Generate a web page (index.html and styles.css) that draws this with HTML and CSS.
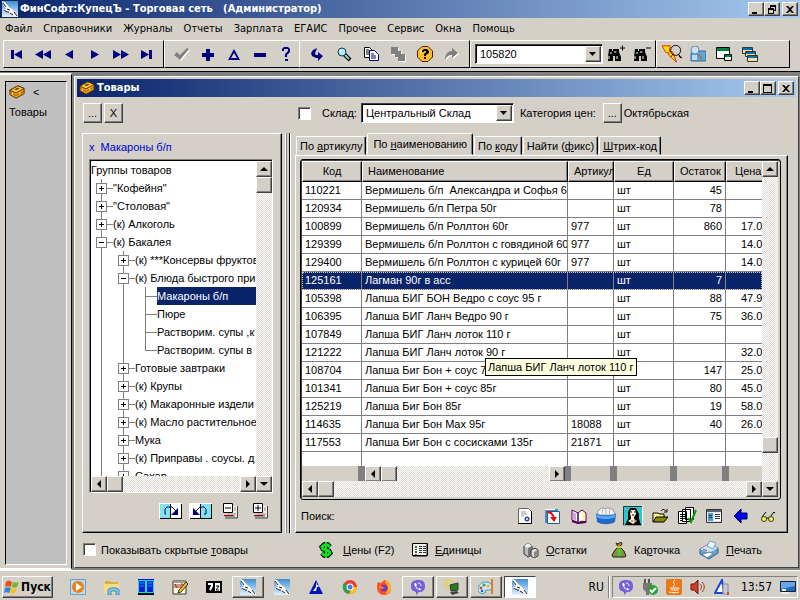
FILE: index.html
```html
<!DOCTYPE html>
<html lang="ru">
<head>
    <meta charset="UTF-8">
    <meta name="viewport" content="width=device-width, initial-scale=1.0">
    <title>ФинСофт:КупецЪ - Торговая сеть</title>
    <link rel="stylesheet" href="styles.css">
</head>
<body>
    <svg class="sprite" aria-hidden="true">
        <defs>
            <linearGradient id="sky" x1="0" y1="0" x2="0" y2="1">
                <stop offset="0" stop-color="#3f8fd0"/>
                <stop offset="1" stop-color="#e4f2fb"/>
            </linearGradient>
        </defs>
        <symbol id="gull" viewBox="0 0 16 16">
            <rect width="16" height="16" fill="url(#sky)"/>
            <path d="M0 0l3 1 4 5 3 2 3 4 3 3v1l-5-2-4-3-4-1-2-2 3 0-3-5z" fill="#fff"/>
            <path d="M1 2l3 4M2 9l3 2 2 0M8 12l3 2M12 11l3 4M5 8l3 1" stroke="#222" stroke-width="1" fill="none"/>
        </symbol>
        <symbol id="box" viewBox="0 0 18 16">
            <path d="M1 6l9-5 7 3v6l-9 5-7-4z" fill="#f0a010" stroke="#4a2800"/>
            <path d="M1 6l7 3 9-5-7-3z" fill="#ffc840" stroke="#4a2800"/>
            <path d="M1 8l7 4 9-5" stroke="#9a5b00" fill="none"/>
            <path d="M6 5l4-2 2 1-4 2z" fill="#7a4300"/>
            <path d="M4 9v2M12 8v2" stroke="#fff3a0"/>
        </symbol>
        <symbol id="binoculars" viewBox="0 0 18 16">
            <path d="M3 4h3v2h1v-2h3v3l3 6v3h-4v-5h-2v5H2v-4z" fill="#000"/>
            <path d="M10 4h3v3l2 5v4h-4z" fill="#000"/>
            <path d="M3 11v3M5 7v2M11 11v3M9 6v2" stroke="#fff"/>
        </symbol>
        <symbol id="viber" viewBox="0 0 16 16">
            <path d="M8 1c5 0 7 2 7 6s-2 6-6 6l-3 3v-3c-3-1-5-2-5-6s2-6 7-6z" fill="#7360d8"/>
            <path d="M5 4c-1 1-1 2 0 3 1 2 2 3 4 4 1 1 2 0 2-1l-2-1-1 1-2-3 1-1-1-2z" fill="#fff"/>
            <path d="M8 4c2 0 3 1 3 3" stroke="#fff" fill="none"/>
        </symbol>
    </svg>

    <div class="titlebar">
        <svg class="icon"><use href="#gull"/></svg>
        <h1>ФинСофт:КупецЪ - Торговая сеть &nbsp; (Администратор)</h1>
        <div class="win-buttons">
            <button class="win-btn" aria-label="Свернуть"><svg viewBox="0 0 10 9"><path d="M1 7h5v2H1z"/></svg></button>
            <button class="win-btn" aria-label="Восстановить"><svg viewBox="0 0 10 9"><path d="M3 0h6v6H7V5h1V2H4v1H3zM1 3h6v6H1zM2 5v3h4V5z" fill-rule="evenodd"/></svg></button>
            <button class="win-btn close" aria-label="Закрыть"><svg viewBox="0 0 10 9"><path d="M1 1h2l2 2 2-2h2L6 4.500l3 3.500H7L5 6 3 8H1l3-3.500z"/></svg></button>
        </div>
    </div>

    <nav class="menu">
        <a href="#">Файл</a>
        <a href="#">Справочники</a>
        <a href="#">Журналы</a>
        <a href="#">Отчеты</a>
        <a href="#">Зарплата</a>
        <a href="#">ЕГАИС</a>
        <a href="#">Прочее</a>
        <a href="#">Сервис</a>
        <a href="#">Окна</a>
        <a href="#">Помощь</a>
    </nav>

    <div class="toolbar">
        <div class="tool-group navy">
            <button aria-label="Первая"><svg class="icon" viewBox="0 0 16 16"><path d="M2 4h3v9H2zM13 4v9L5 8.500z"/></svg></button>
            <button aria-label="Назад на страницу"><svg class="icon" viewBox="0 0 16 16"><path d="M8 4v9L0 8.500zM16 4v9L8 8.500z"/></svg></button>
            <button aria-label="Назад"><svg class="icon" viewBox="0 0 16 16"><path d="M12 4v9L4 8.500z"/></svg></button>
            <button aria-label="Вперед"><svg class="icon" viewBox="0 0 16 16"><path d="M4 4v9l8-4.500z"/></svg></button>
            <button aria-label="Вперед на страницу"><svg class="icon" viewBox="0 0 16 16"><path d="M0 4v9l8-4.500zM8 4v9l8-4.500z"/></svg></button>
            <button aria-label="Последняя"><svg class="icon" viewBox="0 0 16 16"><path d="M2 4v9l8-4.500zM10 4h3v9h-3z"/></svg></button>
        </div>
        <div class="tool-group navy edit">
            <button aria-label="Сохранить"><svg class="icon" viewBox="0 0 16 16"><path d="M1 10l3-3 3 3 7-7 2 1-9 11z" fill="#fff"/><path d="M0 9l3-3 3 3 7-7 2 1-9 11z" fill="#808080"/></svg></button>
            <button aria-label="Добавить"><svg class="icon" viewBox="0 0 16 16"><path d="M6 3h4v4h4v4h-4v4H6v-4H2V7h4z"/></svg></button>
            <button aria-label="Изменить"><svg class="icon" viewBox="0 0 16 16"><path d="M8 3l6 11H2zM8 7l-3 5h6z" fill-rule="evenodd"/></svg></button>
            <button aria-label="Удалить"><svg class="icon" viewBox="0 0 16 16"><path d="M2 7h12v4H2z"/></svg></button>
            <button aria-label="Справка"><svg class="icon" viewBox="0 0 16 16"><path d="M4 5V3l2-2h4l2 2v3l-3 3v2H7V8l3-3V3H6v2zM7 13h3v2H7z"/></svg></button>
        </div>
        <div class="tool-group service">
            <button aria-label="Вернуть"><svg class="icon" viewBox="0 0 16 16"><path d="M8 2L4 4 2 7l1 3 4 2h2v3l5-5-5-4v3H7L6 7l1-2z" fill="#000080"/></svg></button>
            <button aria-label="Найти"><svg class="icon" viewBox="0 0 16 16"><path d="M8 8l6 6" stroke="#000" stroke-width="4"/><path d="M9 9l4 4" stroke="#8fd0e0" stroke-width="2"/><circle cx="6" cy="6" r="4" fill="#aef" stroke="#234"/><path d="M4 5l2-1" stroke="#fff"/></svg></button>
            <button aria-label="Копировать"><svg class="icon" viewBox="0 0 16 16"><path d="M1.500 1.500h5l3 3v7h-8z" fill="#fff" stroke="#000"/><path d="M3 4h3M3 6h4M3 8h4" stroke="#000"/><path d="M6.500 4.500h5l4 4v6h-9z" fill="#fff" stroke="#000080"/><path d="M8 8h3M8 10h5M8 12h5" stroke="#000080"/></svg></button>
            <button aria-label="Вставить"><svg class="icon" viewBox="0 0 16 16"><path d="M2 2h7v4h3v3h4v7H9v-4H6V9H2z" fill="#fff"/><path d="M1 1h7v4h3v3h4v7H8v-4H5V8H1z" fill="#808080"/></svg></button>
            <button aria-label="Помощь"><svg class="icon" viewBox="0 0 16 16"><path d="M5 .5h6L15.500 5v6L11 15.500H5L.5 11V5z" fill="#ffbd2b" stroke="#551800"/><path d="M4 3h3L3 8z" fill="#fff6a0"/><path d="M5 6V4l2-1h3l2 2v2L9 9v1H7V8l2-2V5H7v1zM7 11h2v2H7z"/></svg></button>
            <button aria-label="Повторить"><svg class="icon" viewBox="0 0 16 16"><path d="M2 15c0-6 3-9 7-9V3l6 5-6 5v-3c-3 0-5 1-7 5z" fill="#fff"/><path d="M1 14c0-6 3-9 7-9V2l6 5-6 5V9c-3 0-5 1-7 5z" fill="#808080"/></svg></button>
        </div>
        <div class="tool-group find">
            <div class="combo">
                <input type="text" value="105820" aria-label="Поиск по коду">
                <button class="combo-arrow" aria-label="Список"><svg viewBox="0 0 8 8"><path d="M0 2h7L3.500 6z"/></svg></button>
            </div>
            <button aria-label="Искать вперед"><svg class="icon wide" viewBox="0 0 20 18"><use href="#binoculars" width="18" height="16"/><path d="M14 3h5M16.500 .5v5" stroke="#000"/></svg></button>
            <button aria-label="Искать назад"><svg class="icon wide" viewBox="0 0 20 18"><use href="#binoculars" width="18" height="16"/><path d="M14 3h5" stroke="#000"/></svg></button>
        </div>
        <div class="tool-group windows">
            <button aria-label="Быстрый поиск"><svg class="icon large" viewBox="0 0 22 20"><path d="M0 1h9l-1 6 4 1 4 11L7 11l1-2-4-1z" fill="#ffe000" stroke="#e02000"/><circle cx="15" cy="6" r="5.500" fill="none" stroke="#000"/><path d="M12 10l-2 3M18 10l2 4h2" stroke="#000"/></svg></button>
            <button aria-label="Просмотр"><svg class="icon" viewBox="0 0 16 16"><path d="M1 7h3V5h12v10H1z" fill="#5ba4d8" stroke="#356f9f"/><path d="M2 9h5v5H2z" fill="#b9dcf2"/><path d="M8 8l4 5" stroke="#93795a" stroke-width="2"/><circle cx="5" cy="4" r="4" fill="#cbe4fa" stroke="#6b83b5"/></svg></button>
            <button aria-label="Окна"><svg class="icon" viewBox="0 0 16 16"><path d="M.5 1.500h13v11H.5z" fill="#fff" stroke="#000"/><path d="M1 2h12v3H1z" fill="#008040"/><path d="M8.500 8.500h7v6h-7z" fill="#fff" stroke="#000"/><path d="M9 9h6v2H9z" fill="#008040"/></svg></button>
            <button aria-label="Каскад"><svg class="icon" viewBox="0 0 16 16"><g fill="#ffe0a0" stroke="#333"><path d="M.5 1.500h10v6H.5zM3.500 5.500h10v5h-10zM5.500 9.500h10v6h-10z"/></g><path d="M1 2h9v2H1zM4 6h9v2H4zM6 10h9v2H6z" fill="#0070a8"/></svg></button>
        </div>
    </div>

    <div class="workspace">
        <aside class="sidebar">
            <div class="sidebar-inner">
                <div class="sidebar-head"><svg class="icon"><use href="#box"/></svg><span>&lt;</span></div>
                <a href="#">Товары</a>
            </div>
        </aside>

        <main class="mdi">
            <section class="window">
                <div class="titlebar child">
                    <svg class="icon"><use href="#box"/></svg>
                    <h2>Товары</h2>
                    <div class="win-buttons">
                        <button class="win-btn" aria-label="Свернуть"><svg viewBox="0 0 10 9"><path d="M1 7h5v2H1z"/></svg></button>
                        <button class="win-btn" aria-label="Развернуть"><svg viewBox="0 0 10 9"><path d="M0 0h9v9H0zM1 2v6h7V2z" fill-rule="evenodd"/></svg></button>
                        <button class="win-btn close" aria-label="Закрыть"><svg viewBox="0 0 10 9"><path d="M1 1h2l2 2 2-2h2L6 4.500l3 3.500H7L5 6 3 8H1l3-3.500z"/></svg></button>
                    </div>
                </div>

                <div class="filters">
                    <button class="btn">...</button>
                    <button class="btn">X</button>
                    <div class="stock">
                        <input type="checkbox" id="useStock" aria-label="Учитывать склад">
                        <label for="stock">Склад:</label>
                        <div class="combo">
                            <select id="stock"><option>Центральный Склад</option></select>
                            <span class="combo-arrow"><svg viewBox="0 0 8 8"><path d="M0 2h7L3.500 6z"/></svg></span>
                        </div>
                    </div>
                    <label for="category">Категория цен:</label>
                    <button class="btn" id="category">...</button>
                    <span class="category-name">Октябрьская</span>
                </div>

                <div class="content">
                    <div class="groups">
                        <p class="path"><span>x</span> <span>Макароны б/п</span></p>
                        <div class="tree-frame">
                            <div class="tree-main">
                                <div class="tree">
                                    <div class="root">Группы товаров</div>
                                    <ul>
                                        <li><div class="node"><span class="slot"><button class="plus" aria-label="Развернуть"></button></span><span class="label">"Кофейня"</span></div></li>
                                        <li><div class="node"><span class="slot"><button class="plus" aria-label="Развернуть"></button></span><span class="label">"Столовая"</span></div></li>
                                        <li><div class="node"><span class="slot"><button class="plus" aria-label="Развернуть"></button></span><span class="label">(к) Алкоголь</span></div></li>
                                        <li><div class="node"><span class="slot"><button aria-label="Свернуть"></button></span><span class="label">(к) Бакалея</span></div>
                                            <ul>
                                                <li><div class="node"><span class="slot"><button class="plus" aria-label="Развернуть"></button></span><span class="label">(к) ***Консервы фруктов</span></div></li>
                                                <li><div class="node"><span class="slot"><button aria-label="Свернуть"></button></span><span class="label">(к) Блюда быстрого при</span></div>
                                                    <ul>
                                                        <li><div class="node"><span class="slot"></span><span class="label selected">Макароны б/п</span></div></li>
                                                        <li><div class="node"><span class="slot"></span><span class="label">Пюре</span></div></li>
                                                        <li><div class="node"><span class="slot"></span><span class="label">Растворим. супы ,к</span></div></li>
                                                        <li class="last"><div class="node"><span class="slot"></span><span class="label">Растворим. супы в</span></div></li>
                                                    </ul>
                                                </li>
                                                <li><div class="node"><span class="slot"><button class="plus" aria-label="Развернуть"></button></span><span class="label">Готовые завтраки</span></div></li>
                                                <li><div class="node"><span class="slot"><button class="plus" aria-label="Развернуть"></button></span><span class="label">(к) Крупы</span></div></li>
                                                <li><div class="node"><span class="slot"><button class="plus" aria-label="Развернуть"></button></span><span class="label">(к) Макаронные издели</span></div></li>
                                                <li><div class="node"><span class="slot"><button class="plus" aria-label="Развернуть"></button></span><span class="label">(к) Масло растительное</span></div></li>
                                                <li><div class="node"><span class="slot"><button class="plus" aria-label="Развернуть"></button></span><span class="label">Мука</span></div></li>
                                                <li><div class="node"><span class="slot"><button class="plus" aria-label="Развернуть"></button></span><span class="label">(к) Приправы . соусы. д</span></div></li>
                                                <li><div class="node"><span class="slot"><button class="plus" aria-label="Развернуть"></button></span><span class="label">Сахар</span></div></li>
                                            </ul>
                                        </li>
                                    </ul>
                                </div>
                                <div class="scroll">
                                    <button aria-label="Влево"><svg viewBox="0 0 8 8"><path d="M6 0v8L2 4z"/></svg></button>
                                    <span class="thumb"></span>
                                    <button class="end" aria-label="Вправо"><svg viewBox="0 0 8 8"><path d="M2 0v8l4-4z"/></svg></button>
                                </div>
                            </div>
                            <div class="scroll vertical">
                                <button aria-label="Вверх"><svg viewBox="0 0 8 8"><path d="M0 6h8L4 2z"/></svg></button>
                                <span class="thumb"></span>
                                <button class="end" aria-label="Вниз"><svg viewBox="0 0 8 8"><path d="M0 2h8L4 6z"/></svg></button>
                            </div>
                        </div>
                        <div class="tree-tools">
                            <button aria-label="Переместить"><svg class="icon book" viewBox="0 0 24 16"><path d="M1 0h10v16H1z" fill="#7fe4ee"/><path d="M12 0h10v16H12z" fill="#fff"/><path d="M22.500 0v16M11.500 0v16M1 15.500h22" stroke="#000" fill="none"/><path d="M1 .5h22M.5 0v16" stroke="#fff"/><path d="M7 11H6V6l2-2h5l4 4" fill="none" stroke="#000080"/><path d="M19 5v7h-7z" fill="#000080"/></svg></button>
                            <button aria-label="Вернуть"><svg class="icon book" viewBox="0 0 24 16"><path d="M1 0h10v16H1z" fill="#fff"/><path d="M12 0h10v16H12z" fill="#7fe4ee"/><path d="M22.500 0v16M11.500 0v16M1 15.500h22" stroke="#000" fill="none"/><path d="M1 .5h22M.5 0v16" stroke="#fff"/><path d="M15 11h2V6l-2-2h-4L7 8" fill="none" stroke="#000080"/><path d="M4 5v7h7z" fill="#000080"/></svg></button>
                            <button aria-label="Свернуть все"><svg class="icon" viewBox="0 0 16 16"><path d="M5 3h9v11H4z" fill="#f4f0e8"/><path d="M14.500 3v12H2M2 13h10" stroke="#444" fill="none"/><path d="M1 12.500h9" stroke="#900"/><path d="M11 5h2M11 7h2M4 11h9" stroke="#888"/><path d="M.5.5h9v9h-9z" fill="#fff" stroke="#000"/><path d="M2 5h6" stroke="#000"/></svg></button>
                            <button aria-label="Развернуть все"><svg class="icon" viewBox="0 0 16 16"><path d="M5 3h9v11H4z" fill="#f4f0e8"/><path d="M14.500 3v12H2M2 13h10" stroke="#444" fill="none"/><path d="M1 12.500h9" stroke="#900"/><path d="M11 5h2M11 7h2M4 11h9" stroke="#888"/><path d="M.5.5h9v9h-9z" fill="#fff" stroke="#000"/><path d="M2 5h6M5 2v6" stroke="#000"/></svg></button>
                        </div>
                    </div>

                    <div class="splitter"></div>

                    <div class="goods">
                        <div class="tabs" role="tablist">
                            <button role="tab">По <u>а</u>ртикулу</button>
                            <button role="tab" class="active">По <u>н</u>аименованию</button>
                            <button role="tab">По <u>к</u>оду</button>
                            <button role="tab">Найти (<u>ф</u>икс)</button>
                            <button role="tab"><u>Ш</u>трих-код</button>
                        </div>
                        <div class="page">
                            <div class="grid-frame">
                                <div class="grid-main">
                                    <table>
                                        <colgroup>
                                            <col class="c-code"><col><col class="c-art"><col class="c-unit"><col class="c-rest"><col class="c-price">
                                        </colgroup>
                                        <thead>
                                            <tr><th>Код</th><th class="left">Наименование</th><th class="left">Артикул</th><th>Ед</th><th class="left">Остаток</th><th class="price">Цена</th></tr>
                                        </thead>
                                        <tbody>
                                            <tr><td>110221</td><td>Вермишель б/п &nbsp;Александра и Софья 60г</td><td></td><td>шт</td><td class="num">45</td><td class="price"></td></tr>
                                            <tr><td>120934</td><td>Вермишель б/п Петра 50г</td><td></td><td>шт</td><td class="num">78</td><td class="price"></td></tr>
                                            <tr><td>100899</td><td>Вермишель б/п Роллтон 60г</td><td>977</td><td>шт</td><td class="num">860</td><td class="price">17.00</td></tr>
                                            <tr><td>129399</td><td>Вермишель б/п Роллтон с говядиной 60г</td><td>977</td><td>шт</td><td class="num"></td><td class="price">14.00</td></tr>
                                            <tr><td>129400</td><td>Вермишель б/п Роллтон с курицей 60г</td><td>977</td><td>шт</td><td class="num"></td><td class="price">14.00</td></tr>
                                            <tr class="selected"><td>125161</td><td>Лагман 90г в асс</td><td></td><td>шт</td><td class="num">7</td><td class="price"></td></tr>
                                            <tr><td>105398</td><td>Лапша БИГ БОН Ведро с соус 95 г</td><td></td><td>шт</td><td class="num">88</td><td class="price">47.90</td></tr>
                                            <tr><td>106395</td><td>Лапша БИГ Ланч Ведро 90 г</td><td></td><td>шт</td><td class="num">75</td><td class="price">36.00</td></tr>
                                            <tr><td>107849</td><td>Лапша БИГ Ланч лоток 110 г</td><td></td><td>шт</td><td class="num"></td><td class="price"></td></tr>
                                            <tr><td>121222</td><td>Лапша БИГ Ланч лоток 90 г</td><td></td><td>шт</td><td class="num"></td><td class="price">32.00</td></tr>
                                            <tr><td>108704</td><td>Лапша Биг Бон + соус 7</td><td></td><td></td><td class="num">147</td><td class="price">25.00</td></tr>
                                            <tr><td>101341</td><td>Лапша Биг Бон + соус 85г</td><td></td><td>шт</td><td class="num">80</td><td class="price">45.00</td></tr>
                                            <tr><td>125219</td><td>Лапша Биг Бон 85г</td><td></td><td>шт</td><td class="num">19</td><td class="price">58.00</td></tr>
                                            <tr><td>114635</td><td>Лапша Биг Бон Max 95г</td><td>18088</td><td>шт</td><td class="num">40</td><td class="price">26.00</td></tr>
                                            <tr><td>117553</td><td>Лапша Биг Бон с сосисками 135г</td><td>21871</td><td>шт</td><td class="num"></td><td class="price"></td></tr>
                                            <tr class="blank"><td></td><td></td><td></td><td></td><td></td><td></td></tr>
                                        </tbody>
                                        <tfoot>
                                            <tr>
                                                <td></td>
                                                <td>
                                                    <div class="scroll">
                                                        <button aria-label="Влево"><svg viewBox="0 0 8 8"><path d="M6 0v8L2 4z"/></svg></button>
                                                        <span class="thumb"></span>
                                                        <button class="end" aria-label="Вправо"><svg viewBox="0 0 8 8"><path d="M2 0v8l4-4z"/></svg></button>
                                                    </div>
                                                </td>
                                                <td></td><td></td><td></td><td></td>
                                            </tr>
                                        </tfoot>
                                    </table>
                                    <div class="tooltip">Лапша БИГ Ланч лоток 110 г</div>
                                </div>
                                <div class="scroll vertical low">
                                    <button aria-label="Вверх"><svg viewBox="0 0 8 8"><path d="M0 6h8L4 2z"/></svg></button>
                                    <span class="thumb"></span>
                                </div>
                                <div class="scroll grid-bottom">
                                    <button aria-label="Влево"><svg viewBox="0 0 8 8"><path d="M6 0v8L2 4z"/></svg></button>
                                    <span class="thumb"></span>
                                    <button class="end" aria-label="Вправо"><svg viewBox="0 0 8 8"><path d="M2 0v8l4-4z"/></svg></button>
                                    <button aria-label="Вниз"><svg viewBox="0 0 8 8"><path d="M0 2h8L4 6z"/></svg></button>
                                </div>
                            </div>
                            <div class="search-row">
                                <span>Поиск:</span>
                                <div class="search-tools">
                                    <button aria-label="Документ"><svg class="icon" viewBox="0 0 16 16"><path d="M1.500.5h10l3 3v12h-13z" fill="#fff" stroke="#666"/><path d="M14.500 3v12.500H1" stroke="#000" fill="none"/><path d="M4 4h5M4 6h6M4 8h3" stroke="#999"/><circle cx="10" cy="11" r="2" fill="#bcf" stroke="#000080"/></svg></button>
                                    <button aria-label="Импорт"><svg class="icon" viewBox="0 0 16 16"><path d="M1 1h13v14H1z" fill="#4a8ac4"/><path d="M3.500 3.500h12v12h-12z" fill="#f6fbff" stroke="#235b93"/><path d="M1 1h10v1H1z" fill="#fff"/><path d="M3 4l4 1 3 4" stroke="#e01010" stroke-width="2" fill="none"/><path d="M6 9h7l-3 5z" fill="#e01010"/></svg></button>
                                    <button aria-label="Книга"><svg class="icon" viewBox="0 0 16 16"><path d="M1 2l6 3v10l-6-3zM15 5l-4-3-4 3v10l4-2 4 1z" fill="#fff" stroke="#500050"/><path d="M2 4l3 2v7l-3-2z" fill="#d8a0d8"/><path d="M11 3v9l3 1V5z" fill="#fff4a0"/><path d="M1 13l6 2 8-1" stroke="#500050" stroke-width="2" fill="none"/></svg></button>
                                    <button aria-label="Картотека"><svg class="icon large" viewBox="0 0 22 20"><path d="M2 5l4-4 4 1 3-1 6 2 2 6H2z" fill="#f4f4f4" stroke="#8a8f98"/><path d="M7 2v5M11 3v5M15 3v5" stroke="#aaa"/><path d="M0 7c3 3 19 3 22 0l-1 9c-3 4-17 4-20 0z" fill="#1f6ac8"/><path d="M1 8c4 3 16 3 20 0v3c-5 3-15 3-20 0z" fill="#58a8ec"/></svg></button>
                                    <button aria-label="Портрет"><svg class="icon large" viewBox="0 0 20 20"><path d="M.5.5h19v19H.5z" fill="#28c8cc" stroke="#333"/><path d="M19.500 0v20H0" stroke="#fff" fill="none"/><path d="M7 2h6l3 6v5l2 6H2l3-6V6z" fill="#000"/><path d="M8 4h4l1 4-2 3v2l3 2-4 3-5-3 3-2v-2L7 8z" fill="#fff0d8"/><path d="M8 6h1M11 6h1M9 9h2" stroke="#000"/><path d="M8 15h2M11 15h2" stroke="#c02000"/></svg></button>
                                    <button aria-label="Открыть"><svg class="icon" viewBox="0 0 16 16"><path d="M1 14V5h5l1 1h5v3" fill="#fff690" stroke="#000"/><path d="M1 14l3-5h12l-4 5z" fill="#8a8a00" stroke="#000"/><path d="M9 3c2-3 4-1 5 0M12 4h3V1" stroke="#000" fill="none"/></svg></button>
                                    <button aria-label="Отметить"><svg class="icon large" viewBox="0 0 20 20"><g fill="#fff" stroke="#000"><path d="M8.500 1.500h8v12h-8zM5.500 3.500h8v12h-8zM1.500 5.500h8v12h-8z"/></g><path d="M3 8.500h5M3 10.500h2M6 10.500h2M3 12.500h5M3 14.500h2" stroke="#000"/><path d="M11 12l3 4 5-12" stroke="#00a000" stroke-width="2" fill="none"/></svg></button>
                                    <button aria-label="Карточка"><svg class="icon" viewBox="0 0 16 16"><path d="M.5 1.500h15v13H.5z" fill="#dce4ea" stroke="#333"/><path d="M1 2h14v2H1z" fill="#586878"/><path d="M2 5h5v8H2z" fill="#4e9fd4"/><path d="M8 5h7v8H8z" fill="#fff"/><path d="M9 6.500h5M9 8.500h5M9 10.500h5M3 7.500h3M3 9.500h3" stroke="#333"/></svg></button>
                                    <button aria-label="Назад"><svg class="icon" viewBox="0 0 16 16"><path d="M1 8l7-7v4h6v6H8v4z" fill="#0000f0" stroke="#000060"/></svg></button>
                                    <button aria-label="Просмотр"><svg class="icon" viewBox="0 0 16 16"><path d="M2 9l4-5M10 9l4-5 1 1M6 10h3" stroke="#000" fill="none"/><circle cx="4" cy="11" r="2.500" fill="#ff4" stroke="#333"/><circle cx="11" cy="11" r="2.500" fill="#ff4" stroke="#333"/></svg></button>
                                </div>
                            </div>
                        </div>
                    </div>
                </div>

                <div class="actions">
                    <label class="hidden-goods"><input type="checkbox"> Показывать скрытые <u>т</u>овары</label>
                    <div class="action-group">
                        <button><svg class="icon large" viewBox="0 0 20 20"><g fill="none" stroke="#000" stroke-width="5"><path d="M10 2v16"/><path d="M14 7l-2-2H8L6 7l1 2 6 2 1 2-2 2H8l-2-2"/></g><g fill="none" stroke="#10e020" stroke-width="2"><path d="M10 2v16"/><path d="M14 7l-2-2H8L6 7l1 2 6 2 1 2-2 2H8l-2-2" stroke-width="3"/></g></svg><span><u>Ц</u>ены (F2)</span></button>
                        <button><svg class="icon" viewBox="0 0 16 16"><path d="M.5 1.500h15v12H.5z" fill="#f4f4ee" stroke="#000"/><path d="M15 2v12H1" stroke="#000" fill="none"/><path d="M3 4h2v2H3zM3 9h2v2H3z" fill="#108040"/><path d="M3 7h2v1H3zM3 12h2v1H3z" fill="#c02020"/><path d="M7 4.500h3M11 4.500h3M7 6.500h3M11 6.500h3M7 8.500h3M11 8.500h3M7 10.500h3M11 10.500h3" stroke="#333"/></svg><span><u>Е</u>диницы</span></button>
                    </div>
                    <div class="action-group right">
                        <button><svg class="icon" viewBox="0 0 16 16"><path d="M1 4l4-3 4 3v9l-4 2-4-3z" fill="#bbb" stroke="#333"/><path d="M1 4l4 2 4-2-4-3z" fill="#eee"/><path d="M5 6v9l4-2V4z" fill="#777"/><path d="M8 8l4-2 3 2v6l-4 2-3-2z" fill="#ddd" stroke="#333"/><path d="M11 10v5l4-2V8z" fill="#888"/></svg><span><u>О</u>статки</span></button>
                        <button><svg class="icon" viewBox="0 0 16 16"><path d="M5 1l2 1 3-2 1 2-2 3 4 4 2 5-1 1H2l-1-2 3-5 3-3z" fill="#8c8c48" stroke="#222208"/><path d="M6 5h4" stroke="#e0c000" stroke-width="2"/><path d="M11 8.500H7.500l-1 1 4 2-1 1.500H6M8.500 7v7" stroke="#20f020" fill="none"/></svg><span>Ка<u>р</u>точка</span></button>
                        <button><svg class="icon large" viewBox="0 0 20 20"><path d="M1 9l9-5 9 4v5l-9 6-9-5z" fill="#6aa0d0" stroke="#315d88"/><path d="M1 9l9 4 9-5-9-4z" fill="#cfe4f4"/><path d="M8 6l3-5 6 2-3 6z" fill="#f6fbff" stroke="#68a0d0"/><path d="M3 14l8-2 3 2-6 4z" fill="#fff" stroke="#5080b0"/><path d="M4 9l4 2" stroke="#c04030"/></svg><span><u>П</u>ечать</span></button>
                    </div>
                </div>
            </section>
        </main>
    </div>

    <footer class="taskbar">
        <button class="start"><svg class="icon" viewBox="0 0 16 16"><path d="M2 3c2-2 4-1 6 0L7 8C5 7 3 7 1 8z" fill="#e8501c"/><path d="M9 3c2 1 4 1 6 0l-2 5c-2 1-3 1-5 0z" fill="#6fb92c"/><path d="M1 9c2-1 4-1 6 0l-2 5c-2-1-3-1-5 0z" fill="#2e86d8"/><path d="M7 9c2 1 4 1 6 0l-2 5c-2 1-4 1-5 0z" fill="#f8c01c"/></svg><span>Пуск</span></button>
        <div class="tasks">
            <button aria-label="Проигрыватель"><svg class="icon" viewBox="0 0 16 16"><path d="M.5.5h15v15H.5z" fill="#b8dcf4" stroke="#6aa0cc"/><circle cx="8" cy="8" r="6" fill="#f08010"/><path d="M6 4l6 4-6 4z" fill="#fff"/></svg></button>
            <button aria-label="Проводник"><svg class="icon" viewBox="0 0 16 16"><path d="M1 2h5l1 1h7v3H1z" fill="#d8b040"/><path d="M0 5h15v9H0z" fill="#f6dc84"/><path d="M4 16v-5c1-3 10-3 11 0v5h-3v-4H7v4z" fill="#7cc4ec" stroke="#3c90c4"/></svg></button>
            <button aria-label="Файлы"><svg class="icon" viewBox="0 0 16 16"><path d="M0 0h16v16H0z" fill="#0018d0"/><path d="M.5 1.500h7v12h-7zM8.500 1.500h7v12h-7z" fill="none" stroke="#00e8f8"/><path d="M2 4h4M2 7h4M10 4h4M10 7h4" stroke="#00b0f0"/><path d="M0 15h16" stroke="#000" stroke-width="2"/></svg></button>
            <button aria-label="Заметки"><svg class="icon" viewBox="0 0 16 16"><path d="M1 2h13v13H1z" fill="#fffbe0" stroke="#333"/><path d="M1 2h13v2H1z" fill="#a09c90"/><path d="M3 9V5l2 4V5M7 9V5M9 9V5h2v4" stroke="#a02828" fill="none"/><path d="M6 14l1-3 7-8 2 2-7 8z" fill="#f0c030" stroke="#443000"/></svg></button>
            <button aria-label="Архиватор"><svg class="icon" viewBox="0 0 16 16"><path d="M0 2h16v12H0z"/><path d="M9 4h5v8H9z" fill="#fff"/><path d="M2 5h4v2L4 11" stroke="#fff" stroke-width="2" fill="none"/><path d="M10 7h3l-3 4h3" stroke="#000" fill="none"/></svg></button>
            <button class="raised" aria-label="КупецЪ"><svg class="icon"><use href="#gull"/></svg></button>
            <button aria-label="КупецЪ"><svg class="icon"><use href="#gull"/></svg></button>
            <button aria-label="Парус"><svg class="icon" viewBox="0 0 16 16"><path d="M8 1l7 14H1z" fill="#0014b8"/><path d="M8 3v5l-3 4h3l1-4 3-1-3-1z" fill="#fff"/></svg></button>
            <button aria-label="Chrome"><svg class="icon" viewBox="0 0 16 16"><circle cx="8" cy="8" r="7" fill="#e84030"/><path d="M8 8L2 4a7 7 0 0 0 5 11z" fill="#30a050"/><path d="M8 8h7a7 7 0 0 1-8 7l3-6z" fill="#f8c820"/><circle cx="8" cy="8" r="3.500" fill="#fff"/><circle cx="8" cy="8" r="2.500" fill="#4080e8"/></svg></button>
            <button aria-label="Firefox"><svg class="icon" viewBox="0 0 16 16"><path d="M2 3l2 1c2-1 3-1 4-3 3 0 7 3 7 8s-3 7-7 7-7-3-7-7c0-2 0-4 1-6z" fill="#ff5028"/><path d="M9 1c4 1 6 4 6 8 0 3-2 6-6 6 3-3 4-7 1-10z" fill="#ffb020"/><circle cx="8" cy="9" r="3.500" fill="#7038b8"/><path d="M2 8c2-1 4-1 5 0l2 1-4 1z" fill="#ff8020"/></svg></button>
            <button class="raised" aria-label="Viber"><svg class="icon"><use href="#viber"/></svg></button>
            <button class="raised" aria-label="Сеть"><svg class="icon" viewBox="0 0 16 16"><circle cx="5" cy="5" r="4" fill="none" stroke="#ecd040" stroke-width="3" stroke-dasharray="2 1"/><path d="M6 6l8-2v7l-7 1z" fill="#208020" stroke="#333"/><path d="M6 13l7-1 2 2-7 2z" fill="#444"/></svg></button>
            <button class="raised" aria-label="Paint"><svg class="icon" viewBox="0 0 16 16"><path d="M8 3c-4 0-8 3-8 7 0 5 5 5 7 4 1-1-1-3 1-3h4c4-2 2-8-4-8z" fill="#c8ecf8" stroke="#4898b8"/><circle cx="3" cy="9" r="1.500" fill="#e04030"/><circle cx="6" cy="6" r="1.500" fill="#30a040"/><circle cx="4" cy="12" r="1.200" fill="#3050d0"/><circle cx="10" cy="7" r="1.500" fill="#f0b020"/><path d="M14 0v15" stroke="#d88030" stroke-width="2"/></svg></button>
            <button class="pressed" aria-label="КупецЪ"><svg class="icon"><use href="#gull"/></svg></button>
        </div>
        <span class="lang">RU</span>
        <div class="tray">
            <svg class="icon"><use href="#viber"/></svg>
            <svg class="icon" viewBox="0 0 16 16"><path d="M3 0v4M7 0v4" stroke="#555" stroke-width="2"/><path d="M1 4h9v6l-3 3v3H4v-3l-3-3z" fill="#777"/><circle cx="11" cy="11" r="5" fill="#28a038"/><path d="M8 11l2 2 4-4" stroke="#fff" stroke-width="2" fill="none"/></svg>
            <svg class="icon" viewBox="0 0 16 16"><rect width="16" height="16" rx="2" fill="#e87818"/><path d="M9 1c-4 3 2 3-2 7M4 9h7M5 11h6M3 13c3 1 7 1 10 0M11 9c3-1 2 2 0 2" stroke="#fff" fill="none"/></svg>
            <svg class="icon" viewBox="0 0 16 16"><path d="M1 5h3l4-4v14l-4-4H1z" fill="#c84028" stroke="#701808"/><path d="M10 5c2 2 2 4 0 6M12 3c3 3 3 7 0 10" stroke="#a03020" fill="none"/></svg>
            <svg class="icon" viewBox="0 0 16 16"><path d="M8 1L1 14h9z" fill="#fff" stroke="#1848d8" stroke-width="2"/><path d="M9 5h5v10H9z" fill="#c8ccd4" stroke="#889"/><path d="M13 13h2v3h-2z" fill="#d05030"/></svg>
            <span class="clock">13:57</span>
            <svg class="icon" viewBox="0 0 16 16"><path d="M.5 2.500h15v10H.5z" fill="#2468b8" stroke="#123"/><path d="M1 3h14v4L1 10z" fill="#68a8e8"/><path d="M1 14h8M2 11h4" stroke="#e8eef4" stroke-width="2"/></svg>
        </div>
    </footer>
</body>
</html>
```
FILE: styles.css
```css
* {
    box-sizing: border-box;
}
body {
    margin: 0;
    height: 100vh;
    display: flex;
    flex-direction: column;
    overflow: hidden;
    background-color: #d4d0c8;
    color: #000;
    font-family: "Liberation Sans", Arial, sans-serif;
    font-size: 11px;
    line-height: 14px;
    white-space: nowrap;
}
button, input, select {
    font: inherit;
    color: inherit;
    margin: 0;
    padding: 0;
    border: none;
    border-radius: 0;
    background: none;
}
button {
    display: flex;
    align-items: center;
    justify-content: center;
}
a {
    color: inherit;
    text-decoration: none;
}
ul {
    list-style: none;
    margin: 0;
    padding: 0;
}
.sprite {
    position: absolute;
    width: 0;
    height: 0;
}
.icon {
    width: 16px;
    height: 16px;
    flex: none;
    display: block;
}
.icon.wide {
    width: 20px;
    height: 18px;
}
.icon.large {
    width: 20px;
    height: 20px;
}
.icon.book {
    width: 24px;
}

/* Title bars */
.titlebar {
    display: flex;
    align-items: center;
    flex: none;
    height: 18px;
    padding: 0 2px;
    gap: 2px;
    background: linear-gradient(to right, #0a246a, #a6caf0);
    color: #fff;
}
.titlebar h1, .titlebar h2 {
    flex: 1;
    margin: 0;
    font-family: "DejaVu Sans Condensed", "DejaVu Sans", sans-serif;
    font-size: 11px;
    font-weight: bold;
}
.win-buttons {
    display: flex;
    color: #000;
}
.win-btn {
    width: 16px;
    height: 14px;
}
.win-btn.close {
    margin-left: 2px;
}
.win-btn svg {
    flex: none;
    width: 10px;
    height: 9px;
}
.win-btn, .btn, .combo-arrow, .scroll button, .thumb, .start, .raised {
    background-color: #d4d0c8;
    border: 1px solid;
    border-color: #fff #404040 #404040 #fff;
    box-shadow: inset -1px -1px 0 #808080;
}

/* Menu and toolbar */
.menu {
    display: flex;
    align-items: center;
    flex: none;
    height: 21px;
    padding-left: 5px;
    gap: 11px;
    font-family: "DejaVu Sans Condensed", "DejaVu Sans", sans-serif;
}
.toolbar {
    display: flex;
    flex: none;
    height: 33px;
    padding: 1px 10px 3px 3px;
    border-bottom: 1px solid #000;
}
.tool-group {
    display: flex;
    align-items: center;
    border: 1px solid;
    border-color: #fff #000 #000 #fff;
}
.tool-group > button {
    width: 26px;
    height: 24px;
}
.navy {
    fill: #000080;
    padding-right: 3px;
}
.edit {
    padding: 0 0 0 4px;
    border-right: none;
}
.service {
    padding: 0 4px 0 3px;
}
.service > button {
    width: 27px;
}
.find {
    padding-left: 4px;
}
.windows {
    flex: 1;
    padding-left: 2px;
}
.combo {
    display: flex;
    width: 128px;
    height: 20px;
    padding: 1px;
    background-color: #fff;
    border: 1px solid;
    border-color: #404040 #fff #fff #404040;
    box-shadow: inset 1px 1px 0 #000;
}
.combo input, .combo select {
    flex: 1;
    min-width: 0;
    padding-left: 3px;
    appearance: none;
    outline: none;
}
.combo-arrow {
    display: flex;
    align-items: center;
    justify-content: center;
    width: 16px;
}
.combo-arrow svg, .scroll svg {
    width: 8px;
    height: 8px;
}

/* Workspace */
.workspace {
    display: flex;
    flex: 1;
    min-height: 0;
    border-top: 1px solid #808080;
}
.sidebar {
    flex: none;
    width: 72px;
    padding: 6px 4px 3px 5px;
    border-top: 2px solid #fff;
    border-right: 1px solid #000;
    border-bottom: 2px solid #fff;
}
.sidebar-inner {
    height: 100%;
    padding: 1px 3px;
    background-color: #c0c0c0;
    border: 1px solid;
    border-color: #000 #fff #fff #000;
}
.sidebar-head {
    display: flex;
    align-items: center;
    gap: 8px;
    height: 18px;
    margin-bottom: 4px;
}
.mdi {
    display: flex;
    flex: 1;
    min-width: 0;
    padding: 3px 1px 2px 2px;
    background-color: #808080;
}
.window {
    display: flex;
    flex-direction: column;
    flex: 1;
    min-width: 0;
    padding: 2px 2px 1px;
    background-color: #d4d0c8;
    border: 1px solid;
    border-color: #fff #404040 #404040 #fff;
}
.filters {
    display: flex;
    align-items: center;
    flex: none;
    height: 32px;
    padding-left: 6px;
    gap: 2px;
}
.btn {
    width: 19px;
    height: 20px;
}
.stock {
    display: flex;
    align-items: center;
    margin: 0 4px 0 173px;
}
.stock label {
    margin: 0 4px 0 11px;
}
.stock .combo {
    width: 153px;
}
.filters label {
    min-width: 34px;
}
#category {
    margin-left: 5px;
}
input[type="checkbox"] {
    appearance: none;
    width: 13px;
    height: 13px;
    background-color: #fff;
    border: 1px solid;
    border-color: #808080 #fff #fff #808080;
    box-shadow: inset 1px 1px 0 #404040;
}
.content {
    display: flex;
    flex: 1;
    min-height: 0;
    padding: 4px 8px 0 5px;
}

/* Groups tree */
.groups {
    display: flex;
    flex-direction: column;
    flex: none;
    width: 200px;
    padding: 6px 8px 12px 6px;
    border: 1px solid;
    border-color: #fff #000 #000 #fff;
    box-shadow: inset -1px -1px 0 #808080;
}
.path {
    display: flex;
    gap: 6px;
    margin: 0 0 5px;
    color: #0000d0;
}
.tree-frame {
    display: flex;
    flex: 1;
    min-height: 0;
    border: 1px solid;
    border-color: #808080 #fff #fff #808080;
    box-shadow: inset 1px 1px 0 #000;
    padding: 1px 0 0 1px;
}
.tree-main {
    display: flex;
    flex-direction: column;
    flex: 1;
    min-width: 0;
}
.tree {
    flex: 1;
    min-height: 0;
    overflow: hidden;
    background-color: #fff;
}
.root {
    height: 18px;
    line-height: 18px;
}
.tree li {
    padding-left: 22px;
    background: linear-gradient(#808080, #808080) 10px 0 / 1px 100% no-repeat;
}
.tree li.last {
    background-size: 1px 9px;
}
.node {
    display: flex;
    height: 18px;
    margin-left: -22px;
    line-height: 18px;
}
.slot {
    flex: none;
    display: flex;
    align-items: center;
    width: 22px;
    padding-left: 5px;
    background: linear-gradient(#808080, #808080) 10px 9px / 12px 1px no-repeat;
}
.slot button {
    width: 11px;
    height: 11px;
    border: 1px solid #808080;
    background: linear-gradient(#000, #000) center / 5px 1px no-repeat, #fff;
}
.slot button.plus {
    background: linear-gradient(#000, #000) center / 5px 1px no-repeat, linear-gradient(#000, #000) center / 1px 5px no-repeat, #fff;
}
.label {
    flex: 1;
}
.selected {
    background-color: #0a246a;
    color: #fff;
}
.tree-tools {
    display: flex;
    align-items: center;
    justify-content: flex-end;
    gap: 6px;
    padding-top: 9px;
}
.tree-tools button {
    width: 24px;
    height: 18px;
}

/* Scroll bars */
.scroll {
    display: flex;
    flex: none;
    height: 16px;
    background: conic-gradient(#fff 25%, #dedbd4 0 50%, #fff 0 75%, #dedbd4 0) 0 0 / 2px 2px;
}
.scroll.vertical {
    flex-direction: column;
    width: 16px;
    height: auto;
}
.scroll button, .thumb {
    flex: none;
    width: 16px;
    height: 16px;
}
.scroll .end {
    margin-left: auto;
}
.scroll.vertical .end {
    margin: auto 0 0;
}
.splitter {
    flex: none;
    width: 6px;
    margin: 0 4px 0 3px;
    border-left: 1px solid #fff;
    border-right: 1px solid #fff;
    box-shadow: inset 1px 0 0 #808080, inset -1px 0 0 #000;
}

/* Goods */
.goods {
    display: flex;
    flex-direction: column;
    flex: 1;
    min-width: 0;
}
.tabs {
    display: flex;
    align-items: flex-end;
    flex: none;
    height: 22px;
    padding-left: 1px;
    gap: 1px;
}
.tabs button {
    height: 19px;
    padding: 0 3px;
    border: 1px solid;
    border-color: #fff #000 transparent #fff;
    border-radius: 2px 2px 0 0;
    box-shadow: inset -1px 0 0 #808080;
    white-space: pre;
}
.tabs button.active {
    height: 22px;
    padding: 0 5px;
}
.page {
    display: flex;
    flex-direction: column;
    flex: 1;
    min-height: 0;
    padding: 3px 6px 0 4px;
    border: 1px solid;
    border-color: #fff #000 #000 #fff;
    box-shadow: inset -1px -1px 0 #808080;
}
.grid-frame {
    display: grid;
    grid-template-columns: minmax(0, 1fr) 16px;
    grid-template-rows: minmax(0, 1fr) 16px;
    flex: 1;
    min-height: 0;
    padding: 1px 2px 2px 1px;
    border: 1px solid #000;
    border-radius: 3px;
    box-shadow: inset 1px 1px 0 #404040;
}
.grid-main {
    position: relative;
    overflow: hidden;
    background-color: #fff;
}
.grid-bottom {
    grid-column: 1 / 3;
}
.vertical.low .thumb {
    margin: auto 0 28px;
}
table {
    width: 100%;
    table-layout: fixed;
    border-collapse: separate;
    border-spacing: 0;
}
.c-code { width: 60px; }
.c-art { width: 46px; }
.c-unit { width: 60px; }
.c-rest { width: 52px; }
.c-price { width: 36px; }
th, td {
    height: 18px;
    padding: 0 3px;
    overflow: hidden;
    font-weight: normal;
    line-height: 17px;
    text-align: left;
}
th {
    height: 21px;
    background-color: #d4d0c8;
    border: 1px solid;
    border-color: #fff #000 #000 #fff;
    box-shadow: inset -1px -1px 0 #808080;
    text-align: center;
}
th.left {
    padding: 0 0 0 5px;
    text-align: left;
}
td {
    border-right: 1px solid #808080;
    border-bottom: 1px solid #808080;
}
.num {
    text-align: right;
}
th.price {
    padding: 0 0 0 8px;
    border-right: none;
    box-shadow: inset 0 -1px 0 #808080;
    text-align: left;
}
td.price {
    padding: 0 0 0 15px;
}
td:last-child {
    border-right: none;
}
tr.selected {
    outline: 1px dotted #d4d0c8;
    outline-offset: -1px;
}
.blank td {
    height: 14px;
    border-bottom: none;
}
tfoot td {
    height: 16px;
    padding: 0 3px;
    border: none;
    background: linear-gradient(#808080, #808080) left / 3px 100% no-repeat, linear-gradient(#808080, #808080) right / 4px 100% no-repeat, #d4d0c8;
}
tfoot td:first-child {
    background-size: 0 0, 4px 100%;
}
tfoot td:last-child {
    background-size: 3px 100%, 0 0;
}
.tooltip {
    position: absolute;
    left: 183px;
    top: 197px;
    padding: 1px 2px;
    height: 18px;
    background-color: #ffffe1;
    border: 1px solid #000;
}
.search-row {
    display: flex;
    align-items: center;
    justify-content: space-between;
    flex: none;
    height: 32px;
    padding-left: 1px;
}
.search-tools {
    display: flex;
}
.search-tools button {
    width: 27px;
    height: 22px;
}

/* Bottom actions */
.actions {
    display: flex;
    align-items: center;
    flex: none;
    height: 33px;
    padding-left: 6px;
}
.hidden-goods {
    display: flex;
    align-items: center;
    width: 233px;
    white-space: pre;
}
.hidden-goods input {
    margin-right: 2px;
}
.action-group {
    display: flex;
}
.action-group.right {
    margin: 0 auto 0 15px;
}
.action-group button {
    justify-content: flex-start;
    gap: 7px;
    width: 96px;
    height: 22px;
}
.action-group.right button {
    width: 88px;
}

/* Taskbar */
.taskbar {
    display: flex;
    align-items: center;
    flex: none;
    height: 30px;
    padding: 2px 2px 0;
    border-top: 1px solid #fff;
    font-family: "DejaVu Sans Condensed", "DejaVu Sans", sans-serif;
}
.start {
    width: 51px;
    height: 22px;
    margin-right: 9px;
    gap: 1px;
    font-size: 12px;
    font-weight: bold;
}
.tasks {
    display: flex;
    flex: 1;
    gap: 2px;
}
.tasks button {
    width: 32px;
    height: 22px;
}
.tasks .pressed {
    background-color: #fff;
    border: 1px solid;
    border-color: #404040 #fff #fff #404040;
}
.lang {
    font-size: 12px;
    padding-right: 4px;
    border-right: 1px solid #808080;
    box-shadow: 1px 0 0 #fff;
    line-height: 22px;
}
.tray {
    display: flex;
    align-items: center;
    height: 22px;
    margin-left: 3px;
    padding: 0 1px 0 5px;
    gap: 8px;
    border: 1px solid;
    border-color: #808080 #fff #fff #808080;
}
.clock {
    margin-left: 3px;
    font-size: 12px;
}
```
